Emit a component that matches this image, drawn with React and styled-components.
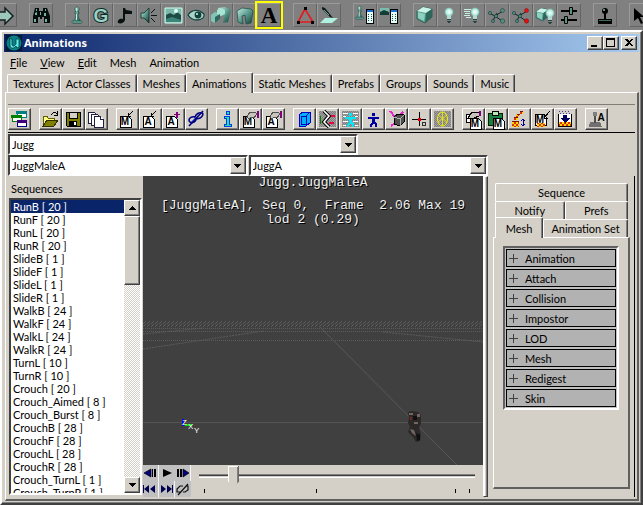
import React, { useState } from 'react';
import styled, { createGlobalStyle, css } from 'styled-components';

const GlobalStyle = createGlobalStyle`
  *, *::before, *::after { box-sizing: border-box; }
  body {
    margin: 0;
    background: #808080;
    color: #000;
    font-family: Lato, "Liberation Sans", sans-serif;
    font-size: 11px;
    line-height: 13px;
  }
  button, select, input { font: inherit; color: inherit; margin: 0; }
  button { padding: 0; border: 0; background: none; }
  svg { display: block; }
`;

const raised = css`
  border: 1px solid;
  border-color: #fff #404040 #404040 #fff;
  box-shadow: inset -1px -1px 0 #808080;
  background: #d4d0c8;
`;

const sunken = css`
  border: 2px solid;
  border-color: #404040 #fff #fff #404040;
  box-shadow: 0 -1px 0 -1px #808080;
`;

const Screen = styled.div`
  display: flex;
  flex-direction: column;
  height: 100vh;
  overflow: hidden;
`;

const EditorBar = styled.div`
  display: flex;
  flex: none;
  justify-content: center;
  gap: 12px;
  height: 30px;
  padding: 3px 0 3px 3px;
  overflow: hidden;
`;

const Group = styled.div`
  display: flex;
  flex: none;
`;

const EditorButton = styled.button`
  width: 24px;
  height: 24px;
  background: #808080;
  border: 1px solid;
  border-color: #9a9a9a #646464 #646464 #9a9a9a;
  outline: ${({ $active }) => ($active ? '2px solid #ffff00' : 'none')};
  svg { margin: -1px; }
`;

const Window = styled.section`
  display: flex;
  flex-direction: column;
  flex: 1;
  min-height: 0;
  padding: 2px;
  background: #d4d0c8;
  border: 2px solid;
  border-color: #fff #404040 #404040 #fff;
  box-shadow: inset -1px -1px 0 #808080;
`;

const TitleBar = styled.header`
  display: flex;
  flex: none;
  align-items: center;
  gap: 2px;
  height: 18px;
  padding: 0 2px;
  background: linear-gradient(to right, #0a246a, #a6caf0);
`;

const Title = styled.h1`
  flex: 1;
  margin: 0;
  color: #fff;
  font: bold 11px/16px "Noto Sans", "Open Sans", sans-serif;
`;

const CaptionButton = styled.button`
  ${raised}
  width: 16px;
  height: 14px;
  &:last-child { margin-left: 2px; }
`;

const Captions = styled.div`
  display: flex;
`;

const MenuBar = styled.nav`
  display: flex;
  flex: none;
  align-items: center;
  gap: 13px;
  height: 20px;
  padding: 0 6px;
`;

const Tabs = styled.div`
  display: flex;
  flex: none;
  align-items: flex-end;
  height: 20px;
  padding: 0 3px;
`;

const Tab = styled.button`
  position: relative;
  flex: ${({ $grow }) => ($grow ? `${$grow} 0 auto` : 'none')};
  height: ${({ $active }) => ($active ? 21 : 18)}px;
  margin-bottom: ${({ $active }) => ($active ? -1 : 0)}px;
  padding: 0 5px;
  z-index: ${({ $active }) => ($active ? 1 : 0)};
  background: #d4d0c8;
  border: 1px solid;
  border-color: #fff #404040 transparent #fff;
  border-bottom: 0;
  border-radius: 2px 2px 0 0;
  box-shadow: inset -1px 0 0 #808080;
`;

const Pane = styled.div`
  display: flex;
  flex-direction: column;
  flex: 1;
  min-height: 0;
  margin-left: 1px;
  padding: 11px 2px 2px;
  border: 1px solid;
  border-width: 1px 2px 2px 1px;
  border-color: #fff #606060 #606060 #fff;
`;

const BrowserBar = styled.div`
  display: flex;
  flex: none;
  gap: 8px;
  padding: 2px 0;
  border-top: 2px groove #d4d0c8;
  border-bottom: 1px solid #000;
`;

const BrowserButton = styled.button`
  ${raised}
  width: 23px;
  height: 22px;
  svg { margin: -1px; }
`;

const Combos = styled.div`
  display: grid;
  grid-template-columns: 1fr 1fr;
  column-gap: 1px;
  flex: none;
  padding: 1px 147px 0 0;
`;

const ComboBox = styled.div`
  ${sunken}
  display: flex;
  height: 21px;
  background: #fff;
`;

const WideCombo = styled.div`
  grid-column: 1 / -1;
  width: 73%;
`;

const ComboSelect = styled.select`
  appearance: none;
  flex: 1;
  min-width: 0;
  padding: 0 2px;
  border: 0;
  background: #fff;
  outline: none;
`;

const ComboArrow = styled.span`
  ${raised}
  display: flex;
  align-items: center;
  justify-content: center;
  width: 16px;
  pointer-events: none;
`;

const Main = styled.main`
  display: flex;
  flex: 1;
  min-height: 0;
`;

const SequenceColumn = styled.div`
  display: flex;
  flex-direction: column;
  flex: none;
  width: 135px;
  padding: 6px 1px 2px;
`;

const ListLabel = styled.label`
  padding: 0 2px 3px;
`;

const ListFrame = styled.div`
  ${sunken}
  display: flex;
  flex: 1;
  min-height: 0;
  background: #fff;
`;

const SequenceList = styled.select`
  flex: 1;
  min-width: 0;
  height: 100%;
  padding: 0;
  border: 0;
  border-radius: 0;
  outline: none;
  background: #fff;
  overflow: hidden;
  option {
    min-height: 13px;
    height: 13px;
    padding: 0 2px;
    line-height: 13px;
  }
  option:checked {
    color: #fff;
    background: #0a246a linear-gradient(#0a246a, #0a246a);
  }
`;

const ScrollTrack = styled.div`
  display: flex;
  flex-direction: column;
  flex: none;
  width: 16px;
  background: repeating-conic-gradient(#d4d0c8 0 25%, #fff 0 50%) 0 0 / 2px 2px;
`;

const ScrollButton = styled.button`
  ${raised}
  display: flex;
  align-items: center;
  justify-content: center;
  height: 16px;
`;

const ScrollThumb = styled.div`
  ${raised}
  height: 69px;
`;

const ScrollSpace = styled.div`
  flex: 1;
`;

const PreviewColumn = styled.div`
  display: flex;
  flex-direction: column;
  flex: 1;
  min-width: 0;
`;

const PreviewFrame = styled.div`
  width: 5px;
  flex: none;
  border: 1px solid;
  border-color: #fff #404040 #404040 #fff;
  box-shadow: inset -1px 0 0 #808080, inset 1px 0 0 #fff;
`;

const Viewport = styled.div`
  display: grid;
  flex: 1;
  min-height: 0;
  background: #404040;
  overflow: hidden;
  > * { grid-area: 1 / 1; min-height: 0; }
  > svg { width: 100%; height: 100%; }
`;

const Overlay = styled.div`
  color: #f0f0f0;
  font: 13px/14px "Liberation Mono", monospace;
  text-align: center;
  text-shadow: 1px 1px 0 #000;
  white-space: pre;
  p { margin: 0; }
  p + p { margin-top: 9px; }
`;

const Playback = styled.div`
  display: flex;
  flex: none;
  height: 32px;
`;

const PlayGrid = styled.div`
  display: grid;
  grid-template-columns: repeat(3, 16px);
  grid-template-rows: 16px 16px;
  background: #c0c0c0;
`;

const PlayButton = styled.button`
  border-right: 1px solid #f4f4f4;
  &:nth-child(2), &:nth-child(6) { border-right-color: #c0c0c0; }
`;

const Timeline = styled.div`
  flex: 1;
  min-width: 0;
  padding: 1px 8px 0;
`;

const Slider = styled.input`
  appearance: none;
  display: block;
  width: 100%;
  height: 22px;
  background: none;
  outline: none;
  &::-webkit-slider-runnable-track {
    height: 22px;
    background:
      linear-gradient(#808080 0 1px, #404040 1px 2px, #d4d0c8 2px 3px, #fff 3px) 0 8px / 100% 4px no-repeat;
  }
  &::-webkit-slider-thumb {
    appearance: none;
    width: 11px;
    height: 21px;
    background:
      linear-gradient(#fff, #fff) 0 0 / 10px 1px no-repeat,
      linear-gradient(#fff, #fff) 0 0 / 1px 16px no-repeat,
      linear-gradient(#404040, #404040) 10px 0 / 1px 21px no-repeat,
      linear-gradient(#808080, #808080) 9px 1px / 1px 20px no-repeat,
      linear-gradient(135deg, #d4d0c8 82%, #404040 82%);
    clip-path: polygon(0 0, 100% 0, 100% 75%, 50% 100%, 0 75%);
  }
`;

const Ticks = styled.div`
  display: grid;
  grid-template-columns: 8fr 10fr 1fr 1px;
  height: 4px;
  margin: 1px 5px 0;
  span { border-left: 1px solid #000; }
`;

const Inspector = styled.aside`
  display: flex;
  flex-direction: column;
  flex: none;
  width: 147px;
  padding: 7px 4px 8px 5px;
  border-right: 1px solid #000;
`;

const TabRow = styled.div`
  display: flex;
  align-items: flex-end;
  height: 18px;
  padding: 0 2px;
`;

const InspectorBody = styled.div`
  flex: 1;
  padding: 8px 9px;
  border: 1px solid;
  border-width: 1px 2px 2px 1px;
  border-color: #fff #606060 #606060 #fff;
`;

const Properties = styled.div`
  ${sunken}
  border-color: #606060 #fff #fff #606060;
  display: flex;
  flex-direction: column;
  gap: 2px;
  padding: 1px;
  background: #c0c0c0;
`;

const Property = styled.button`
  display: flex;
  align-items: center;
  gap: 7px;
  height: 18px;
  padding: 0 2px;
  background: #b2b2b2;
  border: 1px solid #000;
  text-align: left;
`;

const Triangle = ({ up }) => (
  <svg width="7" height="4" shapeRendering="crispEdges">
    <path d={up ? 'M3 0h1v1h1v1h1v1h1v1H0V3h1V2h1V1h1z' : 'M0 0h7v1H6v1H5v1H4v1H3V3H2V2H1V1H0z'} />
  </svg>
);

const Shades = () => (
  <svg width="0" height="0" style={{ position: 'absolute' }} aria-hidden="true">
    <defs>
      <linearGradient id="teal" x1="0" y1="0" x2="1" y2="1">
        <stop offset="0" stopColor="#c4eee2" />
        <stop offset="0.5" stopColor="#5c9a8e" />
        <stop offset="1" stopColor="#123c36" />
      </linearGradient>
      <radialGradient id="glow">
        <stop offset="0" stopColor="#fff" />
        <stop offset="0.6" stopColor="#b8f0e4" />
        <stop offset="1" stopColor="#78a89c" />
      </radialGradient>
      <pattern id="checker" width="2" height="2" patternUnits="userSpaceOnUse">
        <path d="M0 0h1v1H0zM1 1h1v1H1z" fill="#a0a0a0" />
        <path d="M1 0h1v1H1zM0 1h1v1H0z" fill="#808080" />
      </pattern>
      <pattern id="lava" width="4" height="4" patternUnits="userSpaceOnUse">
        <path d="M0 0h4v4H0z" fill="#ffd800" />
        <path d="M0 0h2v2H0zM2 2h2v2H2z" fill="#e03000" />
      </pattern>
      <pattern id="haze" width="4" height="3" patternUnits="userSpaceOnUse">
        <path d="M0 0h1v1H0zM2 1h1v1H2zM1 2h1v1H1z" fill="#5c5c5c" />
      </pattern>
    </defs>
  </svg>
);

const pawn = (
  <>
    <path d="M8 20c0-3 3-4 3-9h-1V9h1c-2-3-1-5 1-5s3 2 1 5h1v2h-1c0 5 3 6 3 9z" fill="url(#teal)" stroke="#1c443e" strokeWidth="0.6" />
    <path d="M7 18h10v2H7z" fill="#6cac9e" stroke="#1c443e" strokeWidth="0.5" />
    <path d="M11 5h1v3h-1zM11 11h1v6h-1z" fill="#c4f0e4" />
  </>
);

const cube = (
  <>
    <path d="M4 8l6-4 9 2v8l-7 6-8-4z" fill="#5aa090" stroke="#1d4a42" strokeWidth="0.7" />
    <path d="M4 8l6-4 9 2-6 4z" fill="#c8f4e8" />
    <path d="M13 10l6-4v8l-7 6z" fill="#2e665c" />
    <path d="M5 9l7 2-1 7-6-3z" fill="#8cd0c0" />
  </>
);

const bulb = (
  <>
    <circle cx="12" cy="9" r="4.5" fill="url(#glow)" />
    <path d="M10 12h4v4h-4z" fill="#b0d8d0" />
    <path d="M10 16h4v1h-4zM10 18h4v1h-4zM11 19h2v1h-2z" fill="#26423e" />
  </>
);

const nodes = (hot) => (
  <>
    <path d="M4 10l6 3 8-5M10 13l-2 5M10 13l7 5M12 10l-2 3" stroke="#0c2824" fill="none" />
    {[[5, 10], [8, 18], [11, 13]].map(([x, y]) => (
      <circle key={x} cx={x} cy={y} r="1.6" fill="#548c80" stroke="#143832" strokeWidth="0.6" />
    ))}
    <circle cx="17.500" cy="7.500" r="2" fill={hot ? '#e81010' : '#548c80'} stroke={hot ? '#801010' : '#143832'} strokeWidth="0.5" />
    <circle cx="17.500" cy="18" r="2.2" fill={hot ? '#e01010' : '#548c80'} stroke={hot ? '#801010' : '#143832'} strokeWidth="0.5" />
  </>
);

const mesh = (
  <path d="M4 8l5-3 9 1 2 2-2 12-5 1-1-9-3 1 1 8-5-2z" fill="url(#teal)" stroke="#1b4a42" strokeWidth="0.7" />
);

const sheet = (
  <g shapeRendering="crispEdges">
    <path d="M13 6h8v15h-8z" />
    <path d="M14 7h6v2h-6z" fill="#1870d8" />
    <path d="M14 9h6v11h-6z" fill="#e4fff8" />
    <path d="M15 11h1v1h-1zM18 11h1v1h-1zM15 13h1v1h-1zM18 13h1v1h-1zM15 15h1v1h-1zM18 15h1v1h-1zM15 17h1v1h-1zM18 17h1v1h-1z" fill="#204c48" />
  </g>
);

const editorIcons = {
  arrow: <path d="M3 9h9V5l8 8-8 8v-4H3z" fill="#9cc8bc" stroke="#14201e" strokeWidth="1.5" />,
  binoculars: (
    <>
      <path d="M6 5h4v3h4V5h4l3 8v7h-6v-6h-2v2h-2v-2H9v6H4v-7z" fill="#050d0c" />
      <path d="M7 6h1v2H7zM16 6h1v2h-1zM6 10l2-1v3H6zM15 10h2v3h-2zM5 16h2v3H5zM16 16h2v3h-2zM11 9h1v3h-1z" fill="#74b0a4" />
    </>
  ),
  pawn,
  g: (
    <text x="12" y="19" textAnchor="middle" fontFamily="Liberation Sans" fontWeight="bold" fontSize="19" fill="#9cd0c4" stroke="#0c2c28" strokeWidth="2" paintOrder="stroke">G</text>
  ),
  note: <path d="M10 5h2l1 2 6 1v3h-7v6c-1 3-4 4-7 3-1-3 2-5 5-4z" fill="#0a1211" />,
  speaker: (
    <>
      <path d="M4 10h3l5-5v15l-5-5H4z" fill="url(#teal)" stroke="#102c28" strokeWidth="0.8" />
      <path d="M14 10l4-4M14 12.500h6M14 15l4 4" stroke="#081412" />
    </>
  ),
  picture: (
    <>
      <path d="M4 5h17v15H4z" fill="#7cb8aa" stroke="#d0fff0" />
      <path d="M5 12l4-2 4 2 3-3 4 3v7H5z" fill="#1c4a44" />
      <path d="M5 16l6-2 9 3v2H5z" fill="#3c8478" />
      <circle cx="15" cy="8" r="2" fill="#e0fff8" />
    </>
  ),
  eye: (
    <>
      <path d="M3 12c4-6 11-6 16-1 1 3-2 6-7 6-4 0-7-2-9-5z" fill="#a8d4c8" stroke="#16423c" strokeWidth="1.3" />
      <circle cx="13" cy="12" r="3.4" fill="#14403a" />
      <circle cx="12" cy="11" r="1" fill="#c0fff0" />
    </>
  ),
  meshes: (
    <>
      <path d="M9 5l7-1 6 3-3 12-5 1 1-8-4 1z" fill="url(#teal)" />
      <path d="M2 12l4-3 5 2v5l-5 4-4-2z" fill="#84c4b4" />
      <path d="M8 7l4-2 4 2v4l-4 2-4-2z" fill="#a8e4d4" />
      <path d="M6 14l5-3v5l-5 4z" fill="#2c685e" />
    </>
  ),
  mesh,
  a: <text x="12" y="20" textAnchor="middle" fontFamily="Liberation Serif" fontWeight="bold" fontSize="23">A</text>,
  triangle: (
    <>
      <path d="M12 6L5 19h15z" fill="none" stroke="#e81818" strokeWidth="1.6" />
      <path d="M11 4h3v3h-3zM4 18h3v3H4zM18 18h3v3h-3z" />
    </>
  ),
  brush: (
    <>
      <path d="M3 20l5-5h13l-6 5z" fill="#b0f0e0" />
      <path d="M5 4l3 1 8 10-3-1-8-8z" fill="#0b1a18" />
      <path d="M7 7l5 5" stroke="#64a498" />
    </>
  ),
  pawnSheet: (
    <>
      <g transform="translate(-3 0) scale(0.8)">{pawn}</g>
      {sheet}
    </>
  ),
  pictureSheet: (
    <>
      <path d="M3 5h9v7H3z" fill="#7cbcae" />
      <path d="M3 9l4-2 5 2v3H3z" fill="#123c36" />
      {sheet}
    </>
  ),
  cube,
  bulb,
  bulbLines: (
    <>
      <path d="M3 6.500h8M3 8.500h6M4 10.500h5M3 12.500h6M5 14.500h5" stroke="#c8eee4" />
      <g transform="translate(2 0)">{bulb}</g>
    </>
  ),
  nodes: nodes(false),
  hotNodes: nodes(true),
  cubeBulb: (
    <>
      <g transform="translate(0 2) scale(0.8)">{cube}</g>
      <g transform="translate(5 1)">{bulb}</g>
    </>
  ),
  mixer: (
    <>
      <path d="M4 8h16M4 17h16" stroke="#000" strokeWidth="2" />
      <path d="M12.500 4.500h3v7h-3zM7.500 13.500h3v7h-3z" fill="#5c9488" stroke="#000" />
    </>
  ),
  joystick: (
    <>
      <circle cx="12" cy="8" r="3" />
      <path d="M11 10h2v6h6v5H5v-5h6z" />
      <path d="M6 17.500h12" stroke="#3c6c64" />
      <circle cx="11" cy="7" r="1" fill="#8cb8b0" />
    </>
  ),
  pointer: (
    <>
      <path d="M5 5l10 9h-4l3 6-2 1-3-6-4 3z" />
      <path d="M14 6l7 3v6z" fill="#78c4b4" />
    </>
  ),
};

const letter = (ch, x = 8, y = 17) => (
  <>
    <path d={`M${x - 4} ${y - 9}h8l3 3v8h-11z`} fill="#fff" stroke="#000" />
    <text x={x + 1} y={y} textAnchor="middle" fontFamily="Liberation Sans" fontWeight="bold" fontSize="10">{ch}</text>
  </>
);

const hand = (
  <>
    <path d="M8 9l3-5h5l2 2-3 4-3-1-2 2z" fill="#c8c4bc" stroke="#505050" />
    <path d="M18 3h2v7h-2z" fill="#800080" />
  </>
);

const figure = (color) => (
  <path d="M10 5h3v3h-3zM6 9h11v2h-4v3l2 2v3h-2v-2l-1-1h-1l-1 1v2H8v-3l2-2v-3H6z" fill={color} />
);

const browserIcons = {
  browser: (
    <>
      <path d="M9 4h9v5H9z" fill="#fff" stroke="#008080" />
      <path d="M8 3h11v3H8z" fill="#008080" />
      <path d="M4 8h9v5H4z" fill="#fff" stroke="#008000" />
      <path d="M3 7h11v3H3z" fill="#008000" />
      <path d="M9 13h9v5H9z" fill="#fff" stroke="#000080" />
      <path d="M9 12h10v3H9z" fill="#400080" />
    </>
  ),
  open: (
    <>
      <path d="M4 18V8h4l1 2h6v3" fill="#ffff80" stroke="#606000" />
      <path d="M4 18l4-6h11l-4 6z" fill="#808000" stroke="#303000" />
      <path d="M12 7c2-3 4-3 6-1M18 3v4h-3" fill="none" stroke="#000" />
    </>
  ),
  save: (
    <>
      <path d="M4 4h14v14H5l-1-1z" fill="#808000" stroke="#000" />
      <path d="M7 4h8v6H7z" fill="#d4d0c8" stroke="#000" />
      <path d="M7 13h8v5H7z" />
      <path d="M12 14h2v3h-2z" fill="#fff" />
    </>
  ),
  copies: (
    <g fill="#fff" stroke="#202040">
      <path d="M3 4h6l2 2v9H3z" />
      <path d="M6 6h6l2 2v9H6z" />
      <path d="M9 8h6l3 3v8H9z" />
      <path d="M15 8v3h3" />
    </g>
  ),
  importMesh: (
    <>
      {letter('M')}
      <path d="M17 3l-5 5M12 5v3h3" stroke="#000" fill="none" />
    </>
  ),
  importAnim: (
    <>
      {letter('A')}
      <path d="M17 3l-5 5M12 5v3h3" stroke="#000" fill="none" />
    </>
  ),
  appendAnim: (
    <>
      {letter('A')}
      <path d="M14 4h2v2h2v1h-2v3h-2V7h-2V6h2z" fill="#800080" />
    </>
  ),
  chain: (
    <g shapeRendering="auto" fill="none" stroke="#000080">
      <path d="M4 12c0-2 3-4 6-3 2 1 1 4-1 5s-5 1-5-2zM10 9c1-3 4-5 7-4 2 1 0 4-2 5s-5 1-5-1z" strokeWidth="1.6" />
      <path d="M4 18L18 3" strokeWidth="1.6" />
      <path d="M6 14l5-5" stroke="#2868e0" strokeWidth="0.8" />
    </g>
  ),
  info: (
    <>
      <path d="M10 3h3v3h-3zM8 8h5v8h2v2H8v-2h2v-6H8z" fill="#28e0a8" stroke="#0040e0" />
    </>
  ),
  meshProps: <>{letter('M')}{hand}</>,
  animProps: <>{letter('A')}{hand}</>,
  bounds: (
    <>
      <path d="M6 7l4-3h7v11l-4 3H6z" fill="#00b0f8" stroke="#0000c0" />
      <path d="M8 8h5v8H8zM13 8l4-4" fill="none" stroke="#0000c0" />
    </>
  ),
  bones: (
    <>
      <path d="M3 3h17v16H3z" fill="url(#checker)" />
      <g shapeRendering="auto" fill="none">
        <path d="M8 3l5 5-5 6 5 5" stroke="#000" strokeWidth="3.6" />
        <path d="M8 3l5 5-5 6 5 5" stroke="#fff" strokeWidth="1.6" />
      </g>
      <path d="M4 8h1v8H4z" fill="#008000" />
      <path d="M15 7h4v2h-4zM13 14h5v2h-5z" fill="#f00040" />
    </>
  ),
  skin: (
    <>
      <path d="M3 3h17v16H3z" fill="url(#checker)" />
      <path d="M4 5h5M14 5h5M4 8h3M16 8h3M4 13h5M14 13h5M4 17h3M16 17h3" stroke="#fff" />
      {figure('#00e8f8')}
    </>
  ),
  person: figure('#0000a0'),
  axes: (
    <>
      <path d="M5 3l5 6M18 4l-4 4M6 18l5-4" stroke="#f020d0" strokeWidth="2" />
      <path d="M9 9l4-3 6 1v7l-4 4-6-2z" fill="#505050" stroke="#000" />
      <path d="M9 9l6 2v7M15 11l4-4" fill="none" stroke="#b0b0b0" />
    </>
  ),
  origin: (
    <>
      <path d="M4 11h14M11 4v14" stroke="#000" />
      <path d="M10 10h3v3h-3z" fill="#e80000" />
      <circle cx="16" cy="16" r="2" fill="none" stroke="#303030" />
    </>
  ),
  wire: (
    <>
      <path d="M3 3h17v16H3z" fill="url(#checker)" />
      <g shapeRendering="auto" fill="none" stroke="#f4f000">
        <ellipse cx="11.500" cy="11" rx="5" ry="7" />
        <path d="M11.500 4v14M7 7l9 7M16 7l-9 7" strokeWidth="0.8" />
      </g>
    </>
  ),
  copyProps: (
    <>
      <path d="M4 6h8v8H4z" fill="#fff" stroke="#000" />
      {letter('M', 12, 19)}
      <path d="M6 10l4-6h7v4l-5 2z" fill="#c8c4bc" stroke="#000" />
      <path d="M17 3h2v5h-2z" fill="#800080" />
    </>
  ),
  pasteProps: (
    <>
      <path d="M3 5h14v12H3z" fill="#188040" stroke="#002000" />
      <path d="M7 3h6v4H7z" fill="#b8e8b8" stroke="#000" />
      {letter('M', 12, 19)}
    </>
  ),
  lod: (
    <>
      <path d="M4 13h7v6H4zM6 9h4v3H6zM8 6h3v3H8zM12 3h3v3h-3z" fill="url(#lava)" />
      <path d="M4 13h7M6 9h4M9 6h3M12 3h3" stroke="#801000" />
      <path d="M15 11v7M13 13l2-2 2 2M13 16l2 2 2-2" fill="none" stroke="#000090" />
    </>
  ),
  redigest: (
    <>
      {letter('M', 8, 15)}
      <path d="M6 15h8v4H6z" fill="url(#lava)" />
      <path d="M19 3l-6 7M13 6v4h4" fill="none" stroke="#000" />
    </>
  ),
  digest: (
    <>
      <path d="M4 6v12h13V6" fill="#fff" stroke="#000" />
      <path d="M5 14h12v4H5z" fill="url(#lava)" />
      <path d="M9 7h4v3h3l-5 5-5-5h3z" fill="#000060" />
      <path d="M5 3h12M6 5h12" stroke="#4040a0" strokeDasharray="1 2" />
    </>
  ),
  stick: (
    <>
      <path d="M5 14h10l2 5H4z" fill="#707070" />
      <path d="M9 7h2v8H9z" fill="#505050" />
      <circle cx="10" cy="6" r="2.5" fill="#808080" />
      <text x="16" y="13" textAnchor="middle" fontFamily="Liberation Sans" fontWeight="bold" fontSize="10">A</text>
    </>
  ),
};

const playIcons = {
  'Previous frame': (
    <>
      <path d="M1 8l7-4v8z" fill="#000080" stroke="#000" strokeWidth="0.7" />
      <path d="M9 4h1v8H9zM11 4h2v8h-2z" />
    </>
  ),
  Play: <path d="M4 4l9 4-9 4z" />,
  'Next frame': (
    <>
      <path d="M2 4h2v8H2zM5 4h2v8H5z" />
      <path d="M8 4l6 4-6 4z" fill="#000080" stroke="#000" strokeWidth="0.7" />
    </>
  ),
  First: <path d="M0 4h1v8H0zM1 8l5-4v8zM7 8l5-4v8z" fill="#000050" />,
  Last: <path d="M2 4l5 4-5 4zM8 4l5 4-5 4zM13 4h1v8h-1z" fill="#000050" />,
  Loop: (
    <path d="M8 5H5L2 8v3h4l5-6h2v4l-3 2H8M3 14L13 3" fill="none" stroke="#101010" strokeWidth="1.2" />
  ),
};

const editorGroups = [
  ['arrow'],
  ['binoculars'],
  ['pawn', 'g', 'note', 'speaker', 'picture', 'eye', 'meshes', 'mesh', 'a'],
  ['triangle', 'brush'],
  ['pawnSheet', 'pictureSheet'],
  ['cube', 'bulb', 'bulbLines', 'nodes', 'hotNodes', 'cubeBulb', 'mixer'],
  ['joystick'],
  ['pointer'],
];

const browserGroups = [
  ['browser'],
  ['open', 'save', 'copies'],
  ['importMesh', 'importAnim', 'appendAnim', 'chain'],
  ['info', 'meshProps', 'animProps'],
  ['bounds', 'bones', 'skin', 'person', 'axes', 'origin', 'wire'],
  ['copyProps', 'pasteProps', 'lod', 'redigest', 'digest'],
  ['stick'],
];

const menus = ['File', 'View', 'Edit', 'Mesh', 'Animation'];
const tabs = ['Textures', 'Actor Classes', 'Meshes', 'Animations', 'Static Meshes', 'Prefabs', 'Groups', 'Sounds', 'Music'];
const properties = ['Animation', 'Attach', 'Collision', 'Impostor', 'LOD', 'Mesh', 'Redigest', 'Skin'];
const sequences = [
  ['RunB', 20], ['RunF', 20], ['RunL', 20], ['RunR', 20],
  ['SlideB', 1], ['SlideF', 1], ['SlideL', 1], ['SlideR', 1],
  ['WalkB', 24], ['WalkF', 24], ['WalkL', 24], ['WalkR', 24],
  ['TurnL', 10], ['TurnR', 10],
  ['Crouch', 20], ['Crouch_Aimed', 8], ['Crouch_Burst', 8],
  ['CrouchB', 28], ['CrouchF', 28], ['CrouchL', 28], ['CrouchR', 28],
  ['Crouch_TurnL', 1], ['Crouch_TurnR', 1],
];

const Combo = ({ label, value }) => (
  <ComboBox>
    <ComboSelect aria-label={label} defaultValue={value}>
      <option>{value}</option>
    </ComboSelect>
    <ComboArrow><Triangle /></ComboArrow>
  </ComboBox>
);

const Scene = () => (
  <svg viewBox="0 0 340 289" preserveAspectRatio="xMidYMid slice" aria-hidden="true">
    <path d="M0 145h340v6H0z" fill="url(#haze)" />
    <g stroke="#5c5c5c" strokeDasharray="1 1" fill="none">
      <path d="M0 152.500h340M0 155.500h340M0 164.500h340" />
      <path d="M0 173L120 155M0 158L60 152M240 156L340 166" strokeDasharray="2 1" />
    </g>
    <path d="M0 246.500h340" stroke="#545454" />
    <path d="M177 151L314 289" stroke="#585858" />
    <path d="M40 243v7" stroke="#0000ff" strokeWidth="2" />
    <path d="M42 249h7" stroke="#00e000" strokeWidth="2" />
    <g fill="#fff" fontFamily="Liberation Sans" fontSize="8">
      <text x="39" y="249">Z</text>
      <text x="45" y="253">X</text>
      <text x="51" y="257">Y</text>
    </g>
    <path d="M265 236l4-1 6 1 3 3v8l-2 5 2 6-1 7-4 1-3-5-5-5 2-5-2-4 1-5z" fill="#2c2828" />
    <path d="M266 237h4v2h-4zM274 238h3v3h-3zM271 246h4v2h-4zM267 253l4 1 2 6-4-3z" fill="#706662" />
    <path d="M267 241h2v3h-2z" fill="#702820" />
    <path d="M270 240h4v4h-4zM273 257l4 2v5l-3 1z" fill="#101010" />
  </svg>
);

const App = () => {
  const [frame, setFrame] = useState(2.06);

  return (
    <Screen>
      <GlobalStyle />
      <Shades />
      <EditorBar>
        {editorGroups.map((group) => (
          <Group key={group[0]}>
            {group.map((name) => (
              <EditorButton key={name} aria-label={name} $active={name === 'a'}>
                <svg width="24" height="24">{editorIcons[name]}</svg>
              </EditorButton>
            ))}
          </Group>
        ))}
      </EditorBar>

      <Window>
        <TitleBar>
          <svg width="16" height="16">
            <path d="M0 0h16v16H0z" fill="#001a30" />
            <circle cx="8" cy="8" r="7.500" fill="#0c8088" />
            <path d="M3 4h3v6c1 2 3 1 4-1V4h3v8l-2 1-1-2c-2 3-6 3-6-1V5z" fill="#60f0e8" stroke="#003840" strokeWidth="0.8" />
          </svg>
          <Title>Animations</Title>
          <Captions>
            <CaptionButton aria-label="Minimize">
              <svg width="14" height="12"><path d="M3 8h6v2H3z" /></svg>
            </CaptionButton>
            <CaptionButton aria-label="Maximize">
              <svg width="14" height="12"><path d="M2 1h9v9H2zM3 3v6h7V3z" fillRule="evenodd" /></svg>
            </CaptionButton>
            <CaptionButton aria-label="Close">
              <svg width="14" height="12" shapeRendering="crispEdges">
                <path d="M3 2h2l2 2 2-2h2L8 5.500 11 9H9L7 7 5 9H3l3-3.500z" />
              </svg>
            </CaptionButton>
          </Captions>
        </TitleBar>

        <MenuBar>
          {menus.map((menu, i) => (
            <button key={menu}>{i < 3 ? <><u>{menu[0]}</u>{menu.slice(1)}</> : menu}</button>
          ))}
        </MenuBar>

        <Tabs>
          {tabs.map((tab) => (
            <Tab key={tab} $active={tab === 'Animations'}>{tab}</Tab>
          ))}
        </Tabs>

        <Pane>
          <BrowserBar>
            {browserGroups.map((group) => (
              <Group key={group[0]}>
                {group.map((name) => (
                  <BrowserButton key={name} aria-label={name}>
                    <svg width="23" height="22" shapeRendering="crispEdges">{browserIcons[name]}</svg>
                  </BrowserButton>
                ))}
              </Group>
            ))}
          </BrowserBar>

          <Combos>
            <WideCombo><Combo label="Package" value="Jugg" /></WideCombo>
            <Combo label="Mesh" value="JuggMaleA" />
            <Combo label="Animation" value="JuggA" />
          </Combos>

          <Main>
            <SequenceColumn>
              <ListLabel htmlFor="sequences">Sequences</ListLabel>
              <ListFrame>
                <SequenceList id="sequences" size={23} defaultValue="RunB">
                  {sequences.map(([name, frames]) => (
                    <option key={name} value={name}>{`${name} [ ${frames} ]`}</option>
                  ))}
                </SequenceList>
                <ScrollTrack>
                  <ScrollButton aria-label="Scroll up"><Triangle up /></ScrollButton>
                  <ScrollThumb />
                  <ScrollSpace />
                  <ScrollButton aria-label="Scroll down"><Triangle /></ScrollButton>
                </ScrollTrack>
              </ListFrame>
            </SequenceColumn>

            <PreviewColumn>
              <Viewport>
                <Scene />
                <Overlay>
                  <p>Jugg.JuggMaleA</p>
                  <p>
                    {`[JuggMaleA], Seq 0,  Frame  ${frame.toFixed(2)} Max 19`}
                    <br />
                    lod 2 (0.29)
                  </p>
                </Overlay>
              </Viewport>
              <Playback>
                <PlayGrid>
                  {Object.keys(playIcons).map((name) => (
                    <PlayButton key={name} aria-label={name}>
                      <svg width="15" height="16">{playIcons[name]}</svg>
                    </PlayButton>
                  ))}
                </PlayGrid>
                <Timeline>
                  <Slider
                    type="range"
                    aria-label="Frame"
                    min="0"
                    max="19"
                    step="0.01"
                    value={frame}
                    onChange={(e) => setFrame(Number(e.target.value))}
                  />
                  <Ticks><span /><span /><span /><span /></Ticks>
                </Timeline>
              </Playback>
            </PreviewColumn>
            <PreviewFrame />

            <Inspector>
              <TabRow><Tab $grow={1}>Sequence</Tab></TabRow>
              <TabRow>
                <Tab $grow={1}>Notify</Tab>
                <Tab $grow={1}>Prefs</Tab>
              </TabRow>
              <TabRow>
                <Tab $grow={2} $active>Mesh</Tab>
                <Tab $grow={1}>Animation Set</Tab>
              </TabRow>
              <InspectorBody>
                <Properties>
                  {properties.map((name) => (
                    <Property key={name}>
                      <svg width="9" height="9" shapeRendering="crispEdges">
                        <path d="M4 0h1v4h4v1H5v4H4V5H0V4h4z" fill="#404040" />
                      </svg>
                      {name}
                    </Property>
                  ))}
                </Properties>
              </InspectorBody>
            </Inspector>
          </Main>
        </Pane>
      </Window>
    </Screen>
  );
};

export default App;
